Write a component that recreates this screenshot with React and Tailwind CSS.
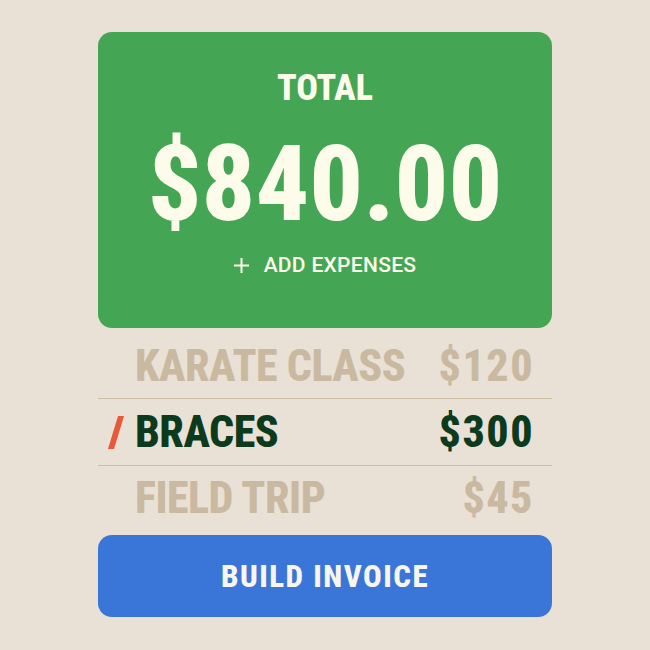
const items = [
  { name: 'KARATE CLASS', amount: '$120', active: false },
  { name: 'BRACES', amount: '$300', active: true },
  { name: 'FIELD TRIP', amount: '$45', active: false },
];

const ExpenseRow = ({ item }) => (
  <div className="flex items-center h-[44px]">
    <div className="w-[37px] flex justify-start pl-[15px]">
      {item.active && <div className="w-[6px] h-[33px] bg-[#e8583a] -skew-x-[17deg]" />}
    </div>
    <div
      className={`flex-1 text-[44px] leading-none font-extrabold tracking-[-0.5px] ${item.active ? 'text-[#0b3a1d]' : 'text-[#c9b9a0]'}`}
    >
      {item.name}
    </div>
    <div
      className={`pr-[18px] text-[44px] leading-none font-extrabold tracking-[1.5px] ${item.active ? 'text-[#0b3a1d]' : 'text-[#c9b9a0]'}`}
    >
      {item.amount}
    </div>
  </div>
);

export default function App() {
  return (
    <div className="min-h-screen bg-[#e9e0d6] font-['Roboto_Condensed',sans-serif]">
      <div className="w-[454px] mx-auto pt-[32px]">
        <div className="h-[296px] rounded-[14px] bg-[#44a655] flex flex-col items-center pt-[38px] text-[#fdfcea]">
          <div className="text-[36px] leading-none font-extrabold">TOTAL</div>
          <div className="mt-[25px] text-[106px] leading-none font-extrabold">$840.00</div>
          <button className="mt-[18px] flex items-center gap-[15px] font-['Roboto',sans-serif] text-[21px] tracking-[0.3px] leading-none font-medium">
            <svg width="15" height="15" viewBox="0 0 15 15" className="-mt-[1px]">
              <path d="M7.5 0v15M0 7.5h15" stroke="currentColor" strokeWidth="2" />
            </svg>
            <span>ADD EXPENSES</span>
          </button>
        </div>

        <div className="mt-[16px]">
          <ExpenseRow item={items[0]} />
          <div className="mt-[10px] h-px bg-[#cdbfa4]" />
          <div className="mt-[11px]">
            <ExpenseRow item={items[1]} />
          </div>
          <div className="mt-[11px] h-px bg-[#cdbfa4]" />
          <div className="mt-[10px]">
            <ExpenseRow item={items[2]} />
          </div>
        </div>

        <button className="mt-[15px] w-full h-[82px] rounded-[14px] bg-[#3a76d8] text-[#f7f5ec] text-[31px] tracking-[1.5px] font-extrabold leading-none">
          BUILD INVOICE
        </button>
      </div>
    </div>
  );
}
